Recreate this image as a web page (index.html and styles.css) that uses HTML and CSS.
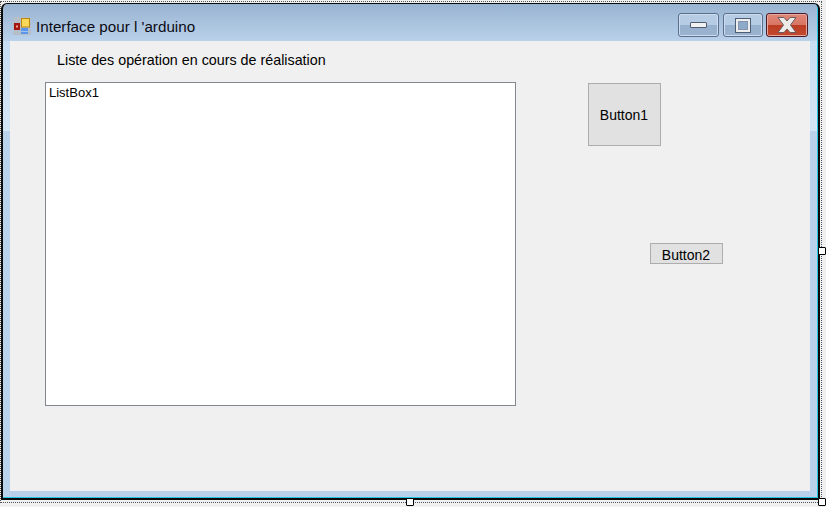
FILE: index.html
```html
<!DOCTYPE html>
<html lang="fr">
<head>
<meta charset="utf-8">
<title>Interface pour l 'arduino</title>
<link rel="stylesheet" href="styles.css">
</head>
<body>
<div class="selection">
  <div class="window">
    <div class="titlebar">
      <svg class="app-icon" width="18" height="18" viewBox="0 0 18 18">
        <rect width="18" height="18" fill="#b4bfca"/>
        <rect x="1" y="6" width="6" height="7" fill="#a3160f"/>
        <rect x="3" y="8.500" width="2" height="2" fill="#f0a090"/>
        <rect x="8.500" y="1.500" width="8" height="8.500" fill="#fbd75a" stroke="#b8860b"/>
        <rect x="8" y="11" width="7" height="6" fill="#5a95ea"/>
        <rect x="8" y="14" width="7" height="1" fill="#9cc4f5"/>
      </svg>
      <span class="title">Interface pour l 'arduino</span>
      <div class="controls">
        <div class="ctl ctl-min"><span class="glyph-min"></span></div>
        <div class="ctl ctl-max"><span class="glyph-max"></span></div>
        <div class="ctl ctl-close">
          <svg width="30" height="18" viewBox="0 0 30 18">
            <path d="M6 1.500h6l3 3.500 3-3.500h6l-5.500 7.500 5.500 7.500h-6l-3-3.500-3 3.500h-6l5.500-7.500z" fill="#ecebe8" stroke="#6b5a5e"/>
          </svg>
        </div>
      </div>
    </div>
    <div class="client">
      <div class="col-left">
        <div class="label">Liste des opération en cours de réalisation</div>
        <div class="listbox">ListBox1</div>
      </div>
      <div class="col-right">
        <div class="btn btn1">Button1</div>
        <div class="btn btn2">Button2</div>
      </div>
    </div>
  </div>
  <span class="handle handle-right"></span>
  <span class="handle handle-bottom"></span>
  <span class="handle handle-corner"></span>
</div>
</body>
</html>
```
FILE: styles.css
```css
* { box-sizing: border-box; }
html, body { margin: 0; padding: 0; }
body {
  width: 826px;
  height: 507px;
  overflow: hidden;
  background: #f0f0f0;
  font-family: "Liberation Sans", Arial, sans-serif;
  font-size: 13px;
  color: #000;
}
.selection {
  position: relative;
  width: 822px;
  height: 502px;
  margin-top: 1px;
  border: 1px dotted #555;
  padding-top: 1px;
}
.window {
  width: 819px;
  height: 497px;
  border: 2px solid #0a0a0a;
  border-top-width: 1px;
  border-radius: 6px 6px 0 0;
  background: linear-gradient(to bottom,
    #99b4d1 0, #b9d1ea 37px,
    #c6dcf1 37px, #d3e6f6 127px,
    #b9d1ea 127px, #b9d1ea 100%);
  box-shadow: inset -1px -1px 0 #27c4e0;
  display: flex;
  flex-direction: column;
}
.titlebar {
  height: 37px;
  display: flex;
  align-items: flex-start;
  padding-left: 10px;
}
.app-icon { margin-top: 13px; flex: none; }
.title {
  margin-left: 5px;
  margin-top: 13px;
  font-size: 15.200px;
  line-height: 20px;
  color: #0c0c14;
}
.controls {
  margin-left: auto;
  margin-top: 9px;
  margin-right: 10px;
  display: flex;
  gap: 3px;
}
.ctl {
  height: 24px;
  border: 1px solid #5a6f8f;
  border-radius: 3px;
  display: flex;
  align-items: center;
  justify-content: center;
  background: linear-gradient(to bottom, #b6cce4 0, #b6cce4 50%, #97b0cd 50%, #9ab3cf 100%);
  box-shadow: inset 0 0 0 1px #cfdeee;
}
.ctl-min { width: 41px; }
.ctl-max { width: 40px; margin-left: 1px; }
.ctl-close {
  width: 42px;
  border-color: #4a1a2a;
  background: linear-gradient(to bottom, #e0877a 0, #d87563 50%, #bb3c22 50%, #c4492e 100%);
  box-shadow: inset 0 0 0 1px #e6a99c;
}
.glyph-min {
  display: block;
  width: 17px;
  height: 6px;
  background: #f2f2f2;
  border: 1px solid #4e5d74;
  border-radius: 1px;
}
.glyph-max {
  display: block;
  width: 16px;
  height: 15px;
  background: #8fa9c8;
  border: 3px solid #eeeeee;
  outline: 1px solid #4e5d74;
  outline-offset: -1px;
  box-shadow: 0 0 0 1px #8497b0 inset;
}
.client {
  width: 800px;
  height: 450px;
  margin-left: 7px;
  background: #f0f0f0;
  display: flex;
}
.col-left { padding-left: 35px; width: 578px; flex: none; }
.label {
  height: 41px;
  padding: 11px 0 0 12px;
  line-height: 16px;
  font-size: 14.300px;
}
.listbox {
  width: 471px;
  height: 324px;
  background: #fff;
  border: 1px solid #828790;
  padding: 2px 3px;
  line-height: 15px;
}
.col-right { display: flex; flex-direction: column; align-items: flex-start; }
.btn {
  width: 73px;
  background: #e1e1e1;
  border: 1px solid #adadad;
  display: flex;
  align-items: center;
  justify-content: center;
  font-size: 14px;
  padding: 1px 1px 0 0;
}
.btn1 { height: 63px; margin-top: 42px; }
.btn2 { height: 21px; margin-top: 97px; margin-left: 62px; padding-top: 2px; }
.handle {
  position: absolute;
  width: 8px;
  height: 8px;
  background: #fff;
  border: 1px solid #000;
  border-radius: 1px;
}
.handle-right { left: 817px; top: 245px; }
.handle-bottom { left: 405px; top: 496px; }
.handle-corner { left: 817px; top: 496px; }
```
